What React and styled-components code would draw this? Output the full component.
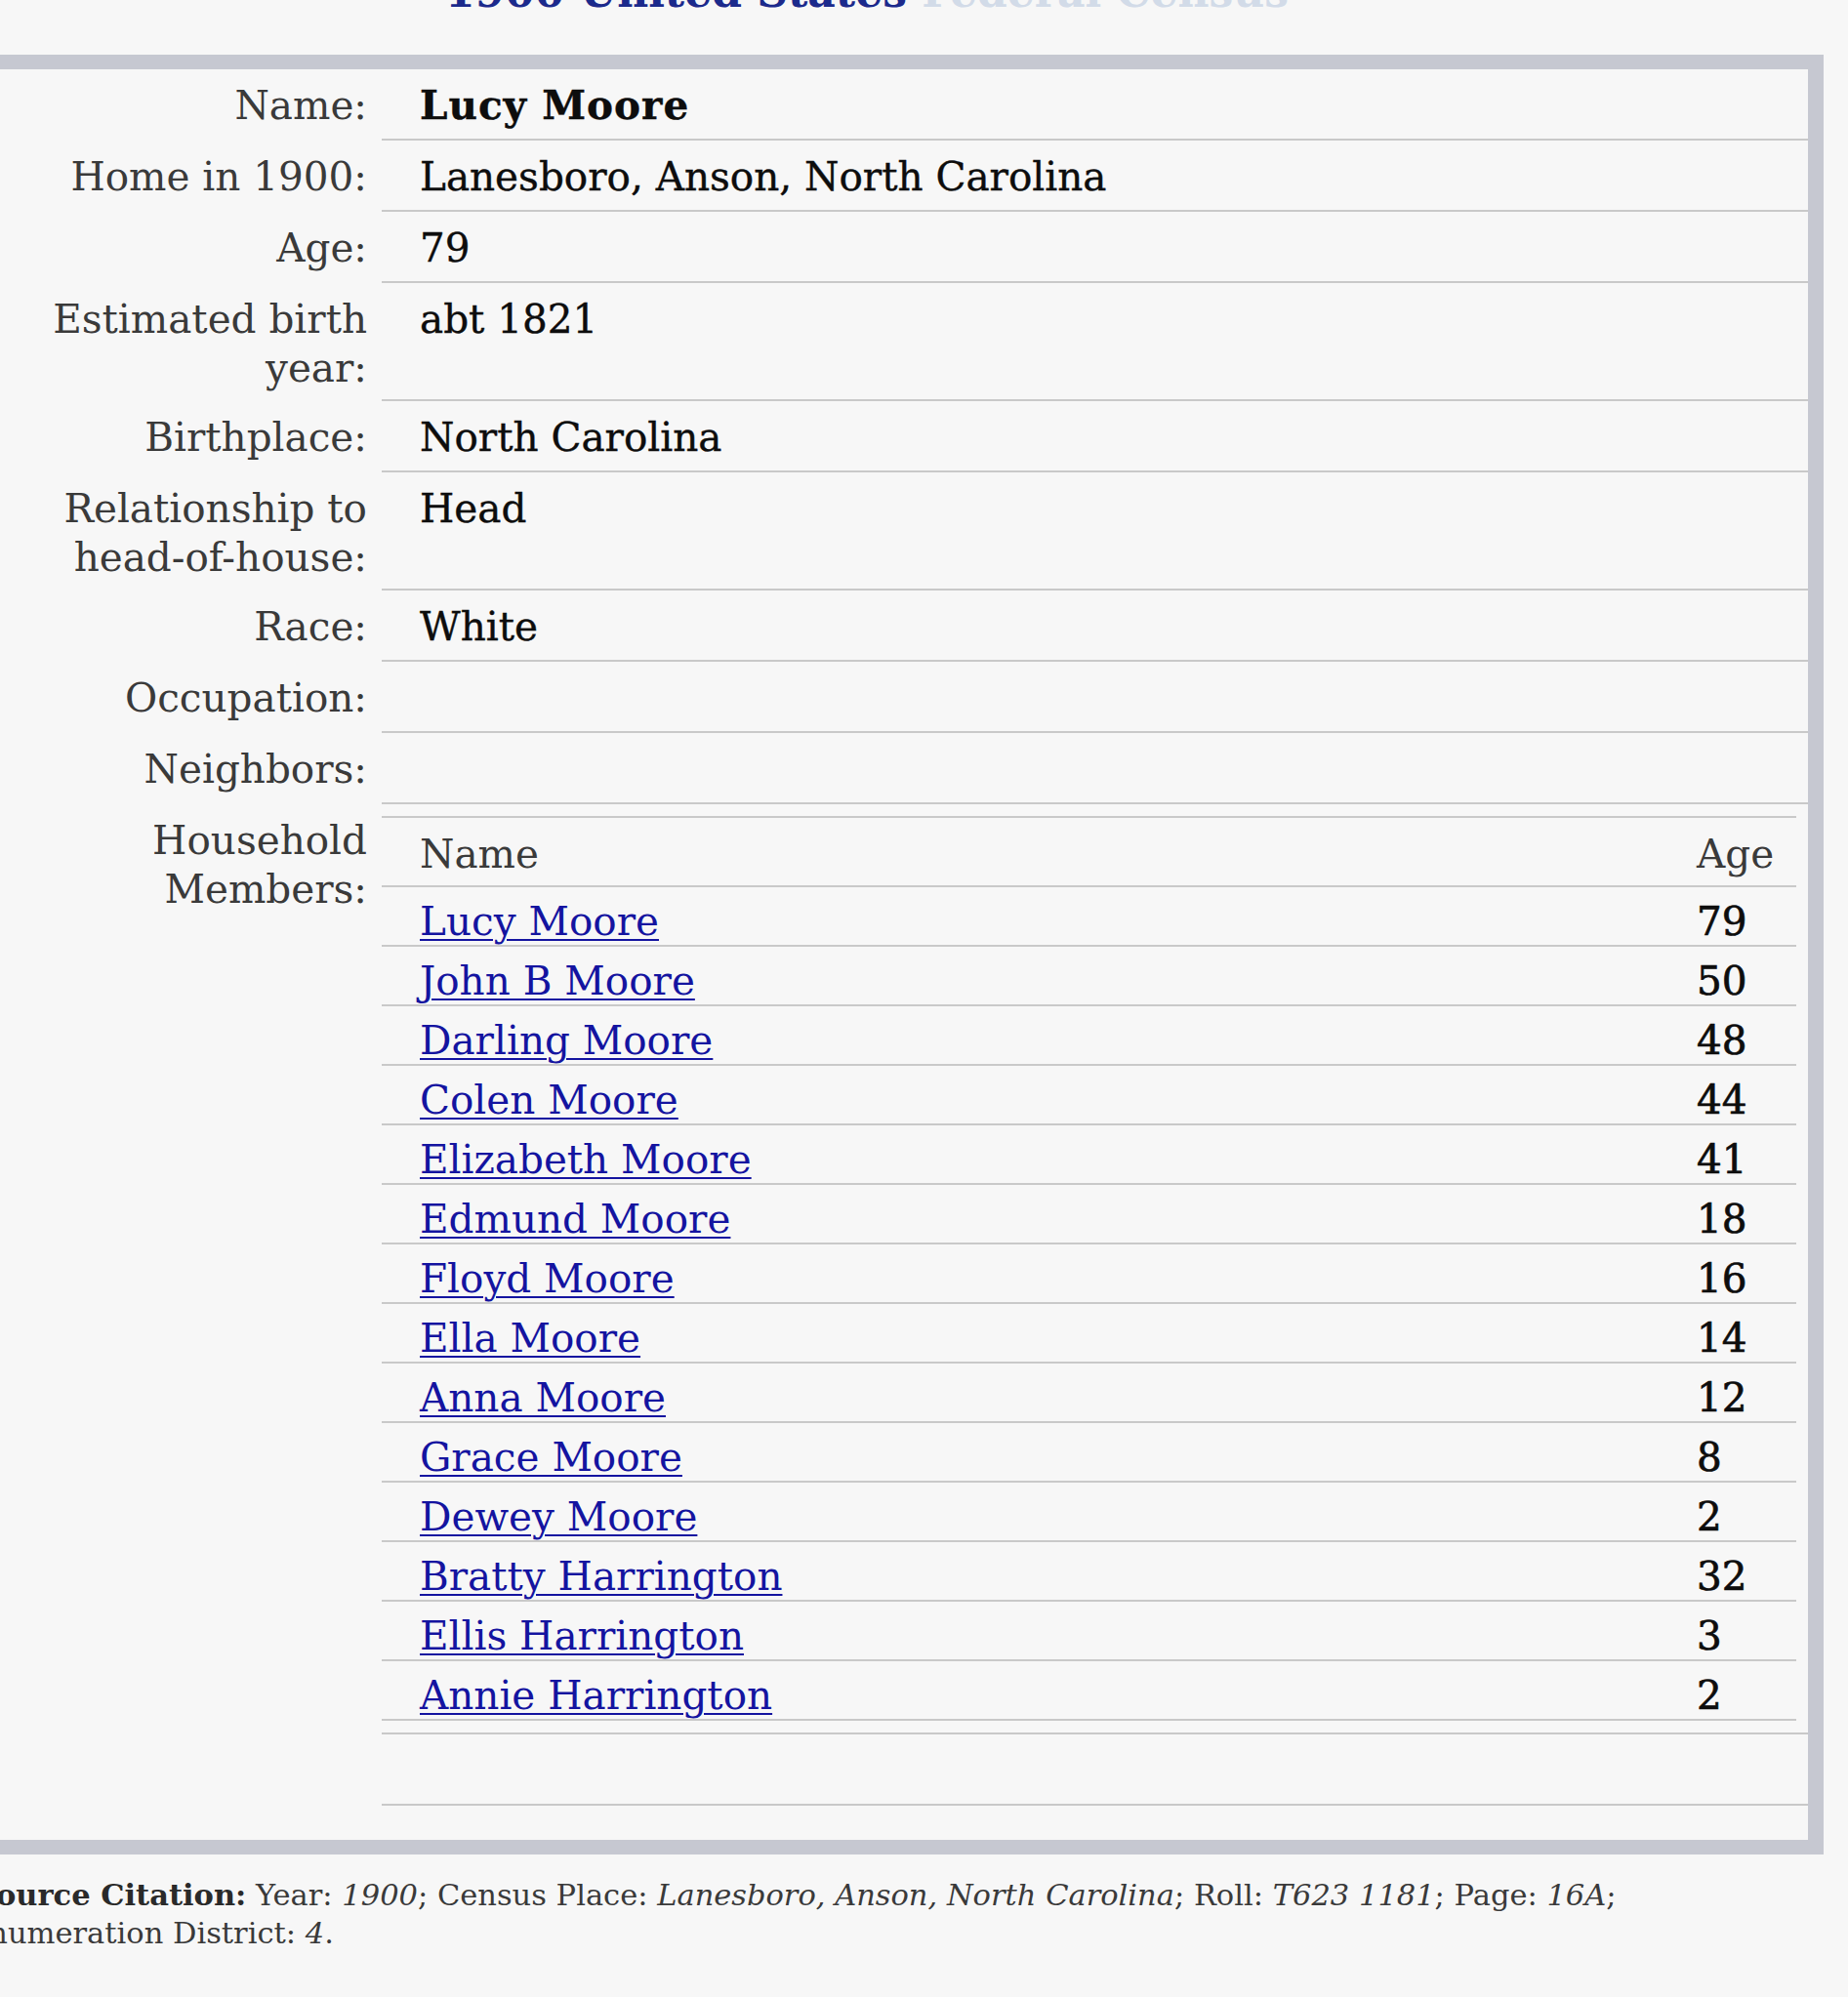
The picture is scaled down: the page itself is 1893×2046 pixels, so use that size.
import React from "react";
import styled, { createGlobalStyle } from "styled-components";

const GlobalStyle = createGlobalStyle`
  html, body {
    margin: 0;
    padding: 0;
    background: #f7f7f7;
  }
  body {
    font-family: "DejaVu Serif", "Liberation Serif", serif;
    overflow: hidden;
  }
`;

const Page = styled.div`
  width: 1893px;
  height: 2046px;
  overflow: hidden;
`;

const Shift = styled.div`
  margin-left: -24px;
`;

const Title = styled.h1`
  margin: -32px 0 0 480px;
  font-size: 44px;
  line-height: 48px;
  font-weight: bold;
  color: #1c2a8c;
  white-space: nowrap;
  span {
    color: #d2dbe8;
  }
`;

const Frame = styled.div`
  margin-top: 40px;
  width: 1861px;
  border: 15px solid #c6c8d1;
  border-right-width: 16px;
  padding-bottom: 35px;
`;

const Row = styled.div`
  display: grid;
  grid-template-columns: 400px 1fr;
`;

const Label = styled.div`
  padding: 12px 15px 9px 0;
  line-height: 50px;
  font-size: 40.5px;
  color: #3a3a3a;
  text-align: right;
`;

const Value = styled.div`
  padding: ${(p) => (p.$nested ? "12px 12px 12px 0" : "12px 0 9px 39px")};
  line-height: 50px;
  min-height: 50px;
  font-size: 40.5px;
  color: #0d0d0d;
  font-weight: ${(p) => (p.$bold ? "bold" : "normal")};
  letter-spacing: ${(p) => (p.$bold ? "1px" : "0")};
  -webkit-text-stroke: 0.4px #0d0d0d;
  border-bottom: 2px solid #c9c9c9;
`;

const Members = styled.div`
  border-top: 2px solid #c9c9c9;
  -webkit-text-stroke: 0;
`;

const MemberRow = styled.div`
  display: grid;
  grid-template-columns: 1fr 102px;
  padding: ${(p) => (p.$head ? "12px 0 7px" : "12px 0 0")};
  line-height: ${(p) => (p.$head ? "50px" : "47px")};
  font-size: 40.5px;
  border-bottom: 2px solid #c9c9c9;
`;

const Cell = styled.div`
  padding-left: ${(p) => (p.$age ? "0" : "39px")};
  color: ${(p) => (p.$head ? "#3a3a3a" : "#0d0d0d")};
  -webkit-text-stroke: ${(p) => (p.$age && !p.$head ? "0.7px #0d0d0d" : "0")};
`;

const MemberLink = styled.a`
  color: #1414a0;
  text-decoration: underline;
  text-decoration-thickness: 2px;
  text-underline-offset: 4px;
`;

const Citation = styled.p`
  margin: 22px 0 0 -10px;
  text-indent: 8px;
  font-size: 30.5px;
  line-height: 39px;
  color: #3a3a3a;
  width: 1728px;
  b {
    color: #2a2a2a;
  }
`;

const rows = [
  { label: "Name:", value: "Lucy Moore", bold: true },
  { label: "Home in 1900:", value: "Lanesboro, Anson, North Carolina" },
  { label: "Age:", value: "79" },
  { label: ["Estimated birth", "year:"], value: "abt 1821" },
  { label: "Birthplace:", value: "North Carolina" },
  { label: ["Relationship to", "head-of-house:"], value: "Head" },
  { label: "Race:", value: "White" },
  { label: "Occupation:", value: "" },
  { label: "Neighbors:", value: "" },
];

const members = [
  ["Lucy Moore", "79"],
  ["John B Moore", "50"],
  ["Darling Moore", "48"],
  ["Colen Moore", "44"],
  ["Elizabeth Moore", "41"],
  ["Edmund Moore", "18"],
  ["Floyd Moore", "16"],
  ["Ella Moore", "14"],
  ["Anna Moore", "12"],
  ["Grace Moore", "8"],
  ["Dewey Moore", "2"],
  ["Bratty Harrington", "32"],
  ["Ellis Harrington", "3"],
  ["Annie Harrington", "2"],
];

function LabelText({ text }) {
  if (Array.isArray(text)) {
    return (
      <>
        {text[0]}
        <br />
        {text[1]}
      </>
    );
  }
  return text;
}

export default function App() {
  return (
    <Page>
      <GlobalStyle />
      <Shift>
        <Title>
          1900 United States <span>Federal Census</span>
        </Title>
        <Frame>
          {rows.map((r) => (
            <Row key={r.label}>
              <Label>
                <LabelText text={r.label} />
              </Label>
              <Value $bold={r.bold}>{r.value}</Value>
            </Row>
          ))}
          <Row>
            <Label>
              Household
              <br />
              Members:
            </Label>
            <Value $nested>
              <Members>
                <MemberRow $head>
                  <Cell $head>Name</Cell>
                  <Cell $head $age>
                    Age
                  </Cell>
                </MemberRow>
                {members.map(([name, age]) => (
                  <MemberRow key={name}>
                    <Cell>
                      <MemberLink href="#">{name}</MemberLink>
                    </Cell>
                    <Cell $age>{age}</Cell>
                  </MemberRow>
                ))}
              </Members>
            </Value>
          </Row>
          <Row>
            <Label />
            <Value />
          </Row>
        </Frame>
        <Citation>
          <b>Source Citation:</b> Year: <i>1900</i>; Census Place:{" "}
          <i>Lanesboro, Anson, North Carolina</i>; Roll: <i>T623 1181</i>; Page:{" "}
          <i>16A</i>; Enumeration District: <i>4</i>.
        </Citation>
      </Shift>
    </Page>
  );
}
